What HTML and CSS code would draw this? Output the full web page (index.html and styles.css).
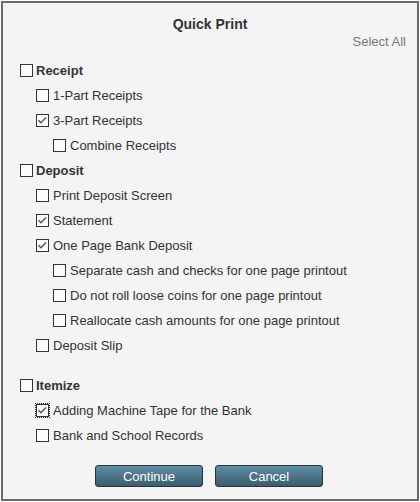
FILE: index.html
```html
<!DOCTYPE html>
<html>
<head>
<meta charset="utf-8">
<link rel="stylesheet" href="styles.css">
</head>
<body>
<div class="dialog">
  <div class="title">Quick Print</div>
  <div class="select-all">Select All</div>
  <div class="list">
    <div class="row l0"><span class="cb"></span><span class="lbl bold">Receipt</span></div>
    <div class="row l1"><span class="cb"></span><span class="lbl">1-Part Receipts</span></div>
    <div class="row l1"><span class="cb"><svg viewBox="0 0 11 11" class="chk"><path d="M1.5 5.2 L4 7.8 L9 2.5"/></svg></span><span class="lbl">3-Part Receipts</span></div>
    <div class="row l2"><span class="cb"></span><span class="lbl">Combine Receipts</span></div>
    <div class="row l0"><span class="cb"></span><span class="lbl bold">Deposit</span></div>
    <div class="row l1"><span class="cb"></span><span class="lbl">Print Deposit Screen</span></div>
    <div class="row l1"><span class="cb"><svg viewBox="0 0 11 11" class="chk"><path d="M1.5 5.2 L4 7.8 L9 2.5"/></svg></span><span class="lbl">Statement</span></div>
    <div class="row l1"><span class="cb"><svg viewBox="0 0 11 11" class="chk"><path d="M1.5 5.2 L4 7.8 L9 2.5"/></svg></span><span class="lbl">One Page Bank Deposit</span></div>
    <div class="row l2"><span class="cb"></span><span class="lbl">Separate cash and checks for one page printout</span></div>
    <div class="row l2"><span class="cb"></span><span class="lbl">Do not roll loose coins for one page printout</span></div>
    <div class="row l2"><span class="cb"></span><span class="lbl">Reallocate cash amounts for one page printout</span></div>
    <div class="row l1"><span class="cb"></span><span class="lbl">Deposit Slip</span></div>
    <div class="row l0 gap"><span class="cb"></span><span class="lbl bold">Itemize</span></div>
    <div class="row l1"><span class="cb focus"><svg viewBox="0 0 11 11" class="chk"><path d="M1.5 5.2 L4 7.8 L9 2.5"/></svg></span><span class="lbl">Adding Machine Tape for the Bank</span></div>
    <div class="row l1"><span class="cb"></span><span class="lbl">Bank and School Records</span></div>
  </div>
  <div class="buttons">
    <button class="btn">Continue</button>
    <button class="btn">Cancel</button>
  </div>
</div>
</body>
</html>
```
FILE: styles.css
```css
html, body {
  margin: 0;
  padding: 0;
  background: #ffffff;
}
body {
  font-family: "Liberation Sans", Arial, sans-serif;
  font-size: 13px;
  color: #333;
}
.dialog {
  margin: 1px;
  width: 418px;
  height: 500px;
  box-sizing: border-box;
  border: 2px solid #6b6b6b;
  background: #f4f4f4;
  padding: 12px 11px 0 17px;
}
.title {
  text-align: center;
  font-weight: bold;
  font-size: 14px;
  line-height: 18px;
  color: #333;
  margin-left: -6px;
}
.select-all {
  text-align: right;
  color: #777;
  line-height: 16px;
  margin-top: 1px;
}
.list {
  margin-top: 8px;
}
.row {
  display: flex;
  align-items: center;
  height: 25px;
}
.row.l1 { padding-left: 16px; }
.row.l2 { padding-left: 33px; }
.row.gap { margin-top: 15px; }
.cb {
  width: 13px;
  height: 13px;
  box-sizing: border-box;
  border: 1px solid #333;
  background: #fbfbfb;
  flex: none;
  display: flex;
}
.cb.focus {
  outline: 1px dotted #222;
  outline-offset: 0px;
}
.chk {
  width: 11px;
  height: 11px;
}
.chk path {
  fill: none;
  stroke: #555;
  stroke-width: 1.4;
}
.lbl {
  margin-left: 4px;
  line-height: 16px;
  white-space: nowrap;
}
.bold {
  font-weight: bold;
  margin-left: 3px;
}
.buttons {
  display: flex;
  justify-content: center;
  gap: 12px;
  margin-top: 17px;
  margin-left: -8px;
}
.btn {
  width: 108px;
  height: 22px;
  box-sizing: border-box;
  border: 1px solid #27353d;
  border-radius: 3px;
  background: linear-gradient(#5e8ea6, #3b5c6e);
  color: #fff;
  font-family: "Liberation Sans", Arial, sans-serif;
  font-size: 13px;
  padding: 0;
}
```
